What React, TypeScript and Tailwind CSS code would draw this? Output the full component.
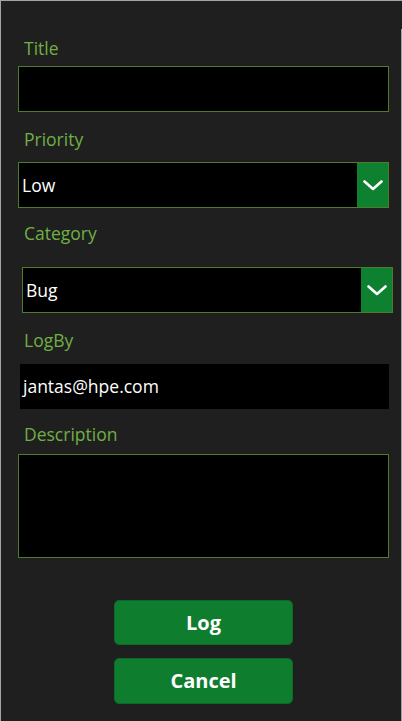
import React from "react";

const labelCls = "block text-[17.5px] leading-[24px] text-[#70af45] pl-[23px]";
const boxBorder = "border-[1.5px] border-[#4f7b2b]";

const Chevron = () => (
  <svg width="20" height="11" viewBox="0 0 20 11" fill="none">
    <path d="M1.5 1.5 L10 9 L18.5 1.5" stroke="white" strokeWidth="2.6" strokeLinecap="round" strokeLinejoin="round" />
  </svg>
);

const Dropdown = ({ value, className }: { value: string; className: string }) => (
  <div className={`flex h-[46px] bg-black ${boxBorder} ${className}`}>
    <div className="flex-1 flex items-center pl-[3px] text-white text-[17.5px]">{value}</div>
    <div className="w-[31px] bg-[#0e8131] flex items-center justify-center">
      <Chevron />
    </div>
  </div>
);

export default function App() {
  return (
    <div
      className="flex w-[402px] h-[721px] bg-[#1f1f1f] border-t border-l border-[#a3a3a3] overflow-hidden"
      style={{ fontFamily: '"Open Sans", "Liberation Sans", sans-serif' }}
    >
      <div className="flex-1 flex flex-col pt-[35px]">
        <label className={labelCls}>Title</label>
        <div className={`mt-[6px] ml-[17px] w-[371px] h-[46px] bg-black ${boxBorder}`} />

        <label className={`${labelCls} mt-[15px]`}>Priority</label>
        <Dropdown value="Low" className="mt-[11px] ml-[17px] w-[371px]" />

        <label className={`${labelCls} mt-[13px]`}>Category</label>
        <Dropdown value="Bug" className="mt-[22px] ml-[21px] w-[371px]" />

        <label className={`${labelCls} mt-[15px]`}>LogBy</label>
        <div className="mt-[12px] ml-[19px] w-[369px] h-[45px] bg-black flex items-center pl-[3px] text-white text-[17.5px]">
          jantas@hpe.com
        </div>

        <label className={`${labelCls} mt-[13px]`}>Description</label>
        <div className={`mt-[8px] ml-[17px] w-[371px] h-[104px] bg-black ${boxBorder}`} />

        <div className="mt-[42px] ml-[113px] w-[179px] flex flex-col gap-[13px]">
          <button className="h-[45px] rounded-[5px] bg-[#0e7d2e] border border-[#0b6a27] text-white font-bold text-[20px]">
            Log
          </button>
          <button className="h-[46px] rounded-[5px] bg-[#0e7d2e] border border-[#0b6a27] text-white font-bold text-[20px]">
            Cancel
          </button>
        </div>
      </div>
      <div className="w-px flex flex-col pt-[28px]">
        <div className="flex-1 bg-[#a3a3a3]" />
      </div>
    </div>
  );
}
